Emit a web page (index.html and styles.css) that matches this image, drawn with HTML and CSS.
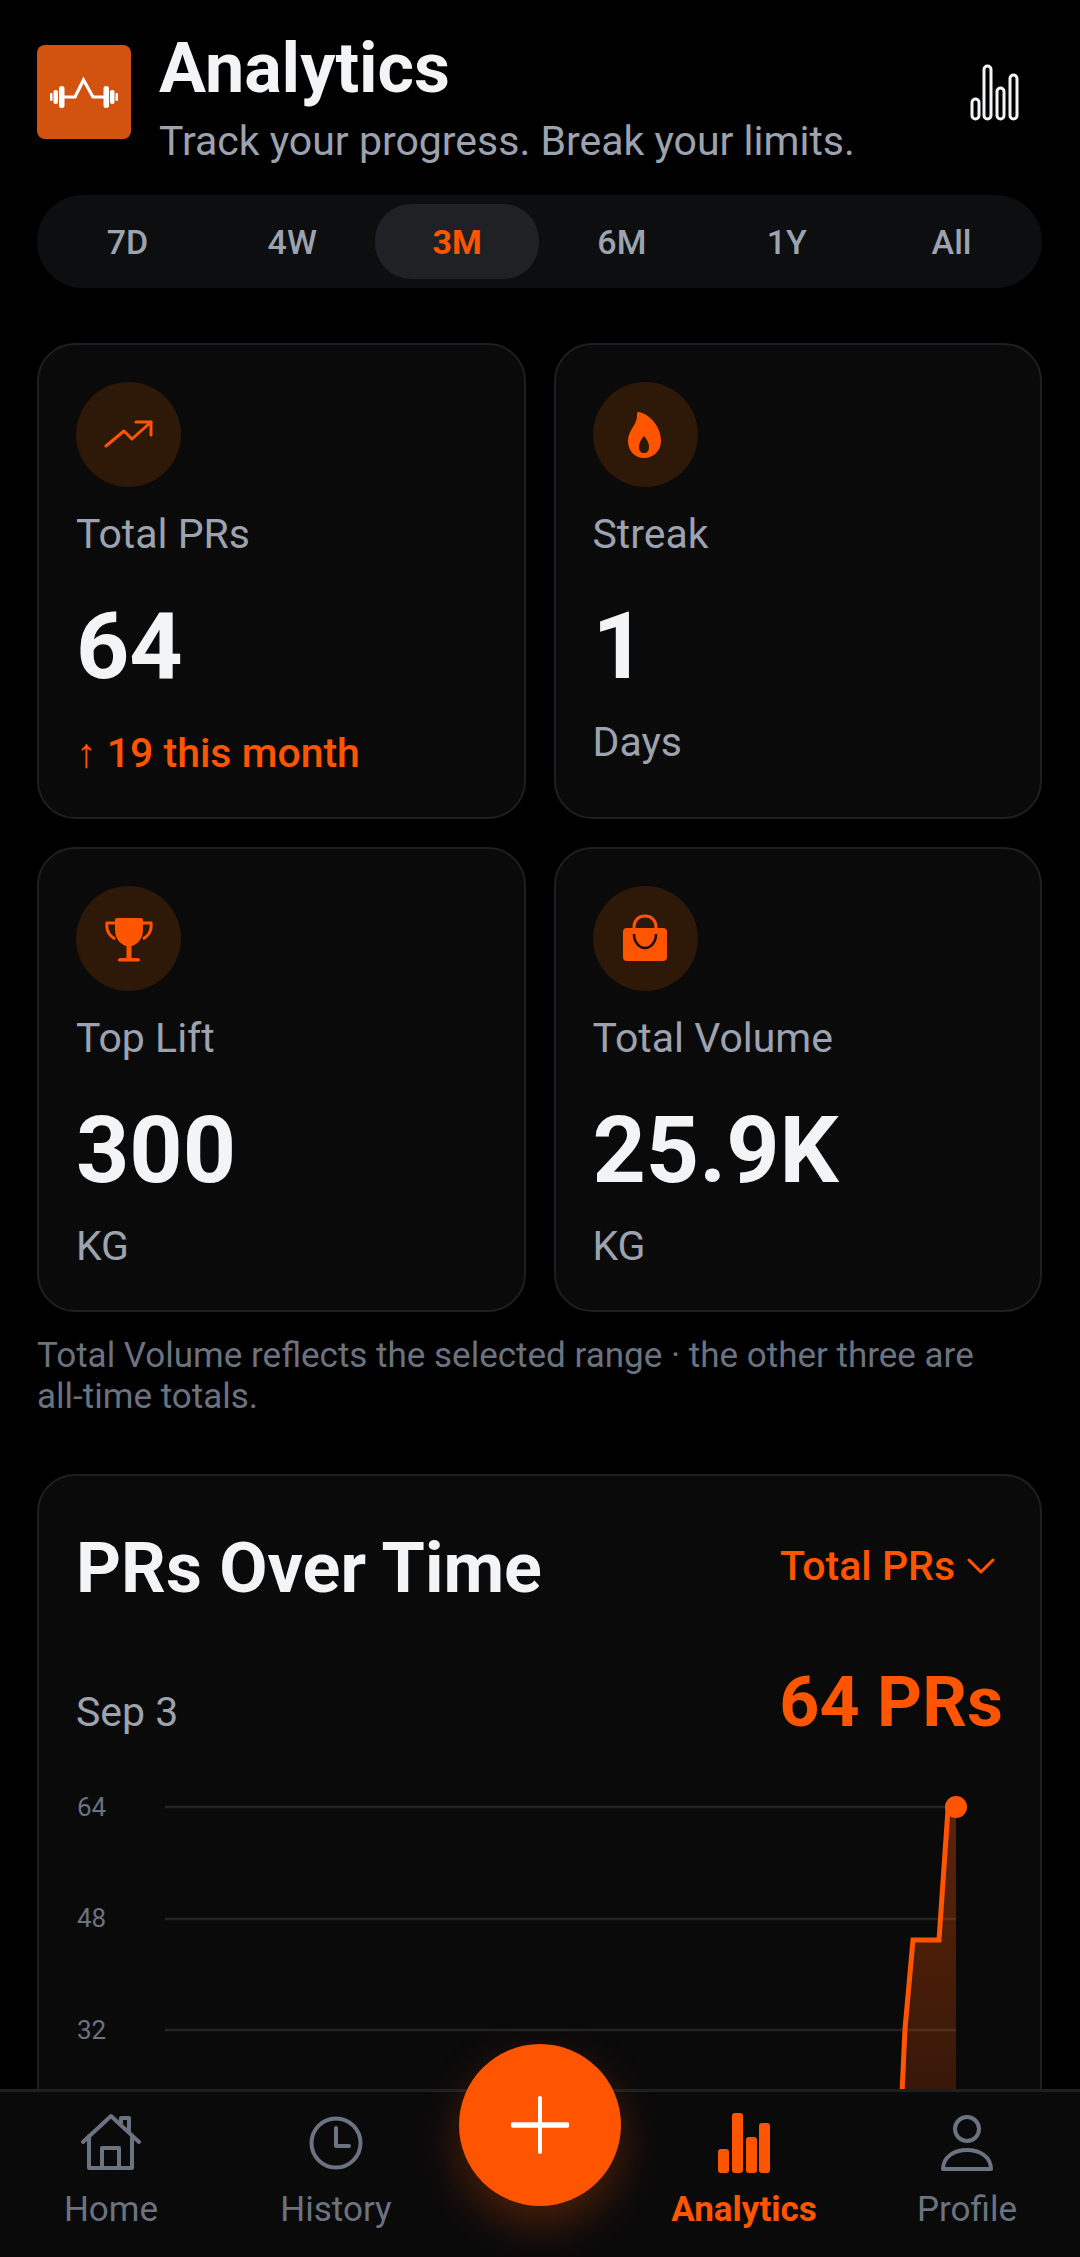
FILE: index.html
```html
<!DOCTYPE html>
<html lang="en">
  <head>
    <meta charset="UTF-8" />
    <meta name="viewport" content="width=device-width, initial-scale=1.0" />
    <title>Analytics</title>
    <link rel="stylesheet" href="styles.css">
  </head>
  <body>
    <div class="header">
      <div class="logo">
        <svg width="94" height="94" viewBox="0 0 94 94">
          <g fill="#fff">
            <rect x="13" y="48" width="2.5" height="8" rx="1" />
            <rect x="16.5" y="45" width="4.5" height="14" rx="2" />
            <rect x="22" y="41" width="5.5" height="22" rx="2.5" />
            <rect x="66.5" y="41" width="5.5" height="22" rx="2.5" />
            <rect x="73" y="45" width="4.5" height="14" rx="2" />
            <rect x="78.5" y="48" width="2.5" height="8" rx="1" />
          </g>
          <path d="M27 52 H38 L46.5 35 L56 52 H67" fill="none" stroke="#fff" stroke-width="3.2" />
        </svg>
      </div>
      <div class="header-text">
        <h1>Analytics</h1>
        <div class="subtitle">Track your progress. Break your limits.</div>
      </div>
      <svg class="header-bars" width="50" height="58" viewBox="0 0 50 58" fill="none" stroke="#f3f4f6" stroke-width="3">
        <rect x="2" y="35" width="7" height="20" rx="3.5" />
        <rect x="14" y="2" width="7" height="53" rx="3.5" />
        <rect x="27" y="24" width="7" height="31" rx="3.5" />
        <rect x="40" y="11" width="7" height="44" rx="3.5" />
      </svg>
    </div>

    <div class="range-tabs">
      <div class="range-tab">7D</div>
      <div class="range-tab">4W</div>
      <div class="range-tab active">3M</div>
      <div class="range-tab">6M</div>
      <div class="range-tab">1Y</div>
      <div class="range-tab">All</div>
    </div>

    <div class="stat-grid">
      <div class="stat-card">
        <div class="stat-icon">
          <svg width="50" height="32" viewBox="0 0 50 32" fill="none" stroke="#ff5500" stroke-width="3" stroke-linecap="round" stroke-linejoin="round">
            <path d="M2 27 L20 12 L28 20 L47 3" />
            <path d="M32 3 H47 V16" />
          </svg>
        </div>
        <div class="stat-label">Total PRs</div>
        <div class="stat-value">64</div>
        <div class="stat-trend">↑ 19 this month</div>
      </div>
      <div class="stat-card">
        <div class="stat-icon">
          <svg width="40" height="52" viewBox="0 0 40 52">
            <path fill="#ff5500" fill-rule="evenodd" d="M13 3 C20 3 36 14 36 32 C36 42 28 49 19 49 C10 49 3 42 3 32 C3 21 12 16 12 7 C12 5 12 3 13 3 Z M19 27 C22 30 24 34 24 38 C24 42 22 44 19 44 C16 44 14 42 14 38 C14 34 16 30 19 27 Z" />
          </svg>
        </div>
        <div class="stat-label">Streak</div>
        <div class="stat-value">1</div>
        <div class="stat-unit">Days</div>
      </div>
      <div class="stat-card">
        <div class="stat-icon">
          <svg width="50" height="50" viewBox="0 0 50 50">
            <path fill="#ff5500" d="M11 6 C11 5 12 4 13 4 H37 C38 4 39 5 39 6 V16 C39 25 33 31 27.5 32 V44 H34 C35 44 36 45 36 46 C36 47 35 47.500 34 47.500 H16 C15 47.500 14 47 14 46 C14 45 15 44 16 44 H22.500 V32 C17 31 11 25 11 16 Z" />
            <path fill="none" stroke="#ff5500" stroke-width="3" d="M11 9 H3 C2 16 4 21 11 25 M39 9 H47 C48 16 46 21 39 25" />
          </svg>
        </div>
        <div class="stat-label">Top Lift</div>
        <div class="stat-value">300</div>
        <div class="stat-unit">KG</div>
      </div>
      <div class="stat-card">
        <div class="stat-icon">
          <svg width="46" height="50" viewBox="0 0 46 50">
            <path fill="none" stroke="#ff5500" stroke-width="3" d="M12 15 V13 C12 6 17 2 23 2 C29 2 34 6 34 13 V15" />
            <rect x="1" y="14" width="44" height="33" rx="4" fill="#ff5500" />
            <path fill="none" stroke="#1c1008" stroke-width="2.600" d="M12 20 C12 28 17 34 23 34 C29 34 34 28 34 20" />
          </svg>
        </div>
        <div class="stat-label">Total Volume</div>
        <div class="stat-value">25.9K</div>
        <div class="stat-unit">KG</div>
      </div>
    </div>

    <div class="stat-note">Total Volume reflects the selected range · the other three are all-time totals.</div>

    <div class="chart-card">
      <div class="chart-head">
        <h2>PRs Over Time</h2>
        <div class="chart-select">
          <span>Total PRs</span>
          <svg width="28" height="16" viewBox="0 0 28 16" fill="none" stroke="#ff5500" stroke-width="3" stroke-linecap="round" stroke-linejoin="round">
            <path d="M2 2 L14 14 L26 2" />
          </svg>
        </div>
      </div>
      <div class="chart-summary">
        <div class="chart-date">Sep 3</div>
        <div class="chart-total">64 PRs</div>
      </div>
      <svg class="chart" width="927" height="400" viewBox="0 0 927 400">
        <defs>
          <linearGradient id="area" x1="0" y1="0" x2="0" y2="1">
            <stop offset="0" stop-color="#ff5500" stop-opacity="0.34" />
            <stop offset="1" stop-color="#ff5500" stop-opacity="0.14" />
          </linearGradient>
        </defs>
        <g class="chart-labels">
          <text x="1" y="37">64</text>
          <text x="1" y="148">48</text>
          <text x="1" y="260">32</text>
        </g>
        <g stroke="#232427" stroke-width="2.500">
          <line x1="89" y1="28" x2="880" y2="28" />
          <line x1="89" y1="140" x2="880" y2="140" />
          <line x1="89" y1="251" x2="880" y2="251" />
        </g>
        <path d="M825 400 L829 250 L837 161 L863 161 L872 30 L880 28 V400 Z" fill="url(#area)" />
        <path d="M822 400 L829 250 L837 161 L863 161 L872 30 L880 28" fill="none" stroke="#ff5500" stroke-width="5" />
        <circle cx="880" cy="28" r="11" fill="#ff5500" />
      </svg>
    </div>

    <div class="bottom-nav">
      <div class="nav-item">
        <svg width="60" height="58" viewBox="0 0 60 58" fill="none" stroke="#6b7280" stroke-width="4" stroke-linecap="round" stroke-linejoin="round">
          <path d="M2 28 L30 2 L58 28" />
          <path d="M8 22 V54 H51 V22" />
          <path d="M21 54 V34 H38 V54" />
          <path d="M40 9 V4 H48 V17" />
        </svg>
        <span>Home</span>
      </div>
      <div class="nav-item">
        <svg width="56" height="58" viewBox="0 0 56 58" fill="none" stroke="#6b7280" stroke-width="4" stroke-linecap="round" stroke-linejoin="round">
          <circle cx="28" cy="29" r="24.500" />
          <path d="M28 14 V32 H41" />
        </svg>
        <span>History</span>
      </div>
      <div class="nav-spacer"></div>
      <div class="nav-item active">
        <svg width="54" height="60" viewBox="0 0 54 60" fill="#ff5500">
          <rect x="1" y="36" width="11" height="24" rx="3" />
          <rect x="15" y="0" width="11" height="60" rx="3" />
          <rect x="29" y="24" width="11" height="36" rx="3" />
          <rect x="42" y="10" width="11" height="50" rx="3" />
        </svg>
        <span>Analytics</span>
      </div>
      <div class="nav-item">
        <svg width="54" height="58" viewBox="0 0 54 58" fill="none" stroke="#6b7280" stroke-width="4" stroke-linecap="round" stroke-linejoin="round">
          <circle cx="27" cy="15" r="12" />
          <path d="M3 55 C3 43 14 36 27 36 C40 36 51 43 51 55 Z" />
        </svg>
        <span>Profile</span>
      </div>
      <div class="fab">
        <svg width="58" height="58" viewBox="0 0 58 58" stroke="#fff" stroke-linecap="round">
          <line x1="29" y1="2" x2="29" y2="56" stroke-width="4" />
          <line x1="2" y1="29" x2="56" y2="29" stroke-width="5.500" />
        </svg>
      </div>
    </div>
  </body>
</html>
```

FILE: styles.css
```css
html,
body {
  height: 2257px;
  overflow: hidden;
}
body {
  font-family: Roboto, "Liberation Sans", sans-serif;
  background-color: #000;
  color: #f3f4f6;
  margin: 0;
}
h1,
h2 {
  margin: 0;
  font-weight: 700;
}

.header {
  display: flex;
  align-items: flex-start;
  height: 195px;
  padding: 32px 38px 0 37px;
  box-sizing: border-box;
}
.logo {
  width: 94px;
  height: 94px;
  margin-top: 13px;
  background-color: #d2530f;
  border-radius: 8px;
  flex-shrink: 0;
}
.logo svg {
  display: block;
}
.header-text {
  flex: 1;
  margin-left: 28px;
}
.header-text h1 {
  font-size: 70px;
  line-height: 72px;
}
.subtitle {
  font-size: 41px;
  line-height: 50px;
  margin-top: 12px;
  color: #9ca3af;
}
.header-bars {
  margin-top: 32px;
  margin-right: 22px;
}

.range-tabs {
  display: flex;
  height: 93px;
  margin: 0 38px 0 37px;
  padding: 9px 8px;
  box-sizing: border-box;
  background-color: #0d0e10;
  border-radius: 46px;
}
.range-tab {
  flex: 1;
  display: flex;
  align-items: center;
  justify-content: center;
  font-size: 34px;
  font-weight: 500;
  color: #9ca3af;
  border-radius: 36px;
}
.range-tab.active {
  background-color: #1f2125;
  color: #ff5500;
  font-weight: 700;
}

.stat-grid {
  display: grid;
  grid-template-columns: 1fr 1fr;
  gap: 28px;
  margin: 55px 38px 0 37px;
}
.stat-card {
  padding: 37px 37px 38px;
  background-color: #0a0a0b;
  border: 2px solid #1e1f22;
  border-radius: 38px;
}
.stat-icon {
  display: flex;
  align-items: center;
  justify-content: center;
  width: 105px;
  height: 105px;
  background-color: #2e1808;
  border-radius: 50%;
}
.stat-label {
  font-size: 41px;
  line-height: 52px;
  margin-top: 21px;
  color: #9ca3af;
}
.stat-value {
  font-size: 93px;
  font-weight: 700;
  line-height: 110px;
  margin-top: 32px;
  color: #f3f4f6;
}
.stat-trend {
  font-size: 41px;
  font-weight: 500;
  line-height: 52px;
  margin-top: 25px;
  color: #ff5500;
}
.stat-unit {
  font-size: 41px;
  line-height: 52px;
  margin-top: 14px;
  color: #9ca3af;
}
.stat-note {
  margin: 23px 38px 0 37px;
  max-width: 950px;
  font-size: 35px;
  line-height: 41px;
  color: #6b7280;
}

.chart-card {
  margin: 57px 38px 0 37px;
  padding: 47px 37px 0;
  height: 900px;
  background-color: #0a0a0b;
  border: 2px solid #1e1f22;
  border-radius: 38px;
}
.chart-head {
  display: flex;
  align-items: center;
  justify-content: space-between;
  padding-right: 8px;
}
.chart-head h2 {
  font-size: 70px;
  line-height: 90px;
  color: #f3f4f6;
}
.chart-select {
  display: flex;
  align-items: center;
  gap: 12px;
  margin-top: -5px;
  font-size: 41px;
  font-weight: 500;
  color: #ff5500;
}
.chart-summary {
  display: flex;
  align-items: baseline;
  justify-content: space-between;
  margin-top: 48px;
}
.chart-date {
  font-size: 41px;
  color: #9ca3af;
}
.chart-total {
  font-size: 70px;
  font-weight: 700;
  color: #ff5500;
}
.chart {
  display: block;
  margin-top: 36px;
}
.chart-labels {
  font-size: 26px;
  fill: #6b7280;
}

.bottom-nav {
  position: fixed;
  left: 0;
  right: 0;
  bottom: 0;
  height: 168px;
  display: grid;
  grid-template-columns: 222px 228px 180px 228px 218px;
  background-color: #0a0a0b;
  border-top: 3px solid #1e1f22;
  box-sizing: border-box;
}
.nav-item {
  display: flex;
  flex-direction: column;
  align-items: center;
  font-size: 35px;
  color: #6b7280;
}
.nav-item svg {
  height: 60px;
  margin-top: 21px;
}
.nav-item span {
  margin-top: 15px;
  line-height: 44px;
}
.nav-item.active {
  color: #ff5500;
  font-weight: 700;
}
.fab {
  position: absolute;
  left: 459px;
  top: -48px;
  width: 162px;
  height: 162px;
  display: flex;
  align-items: center;
  justify-content: center;
  background-color: #ff5500;
  border-radius: 50%;
  box-shadow: 0 18px 44px rgba(255, 85, 0, 0.28);
}
```
